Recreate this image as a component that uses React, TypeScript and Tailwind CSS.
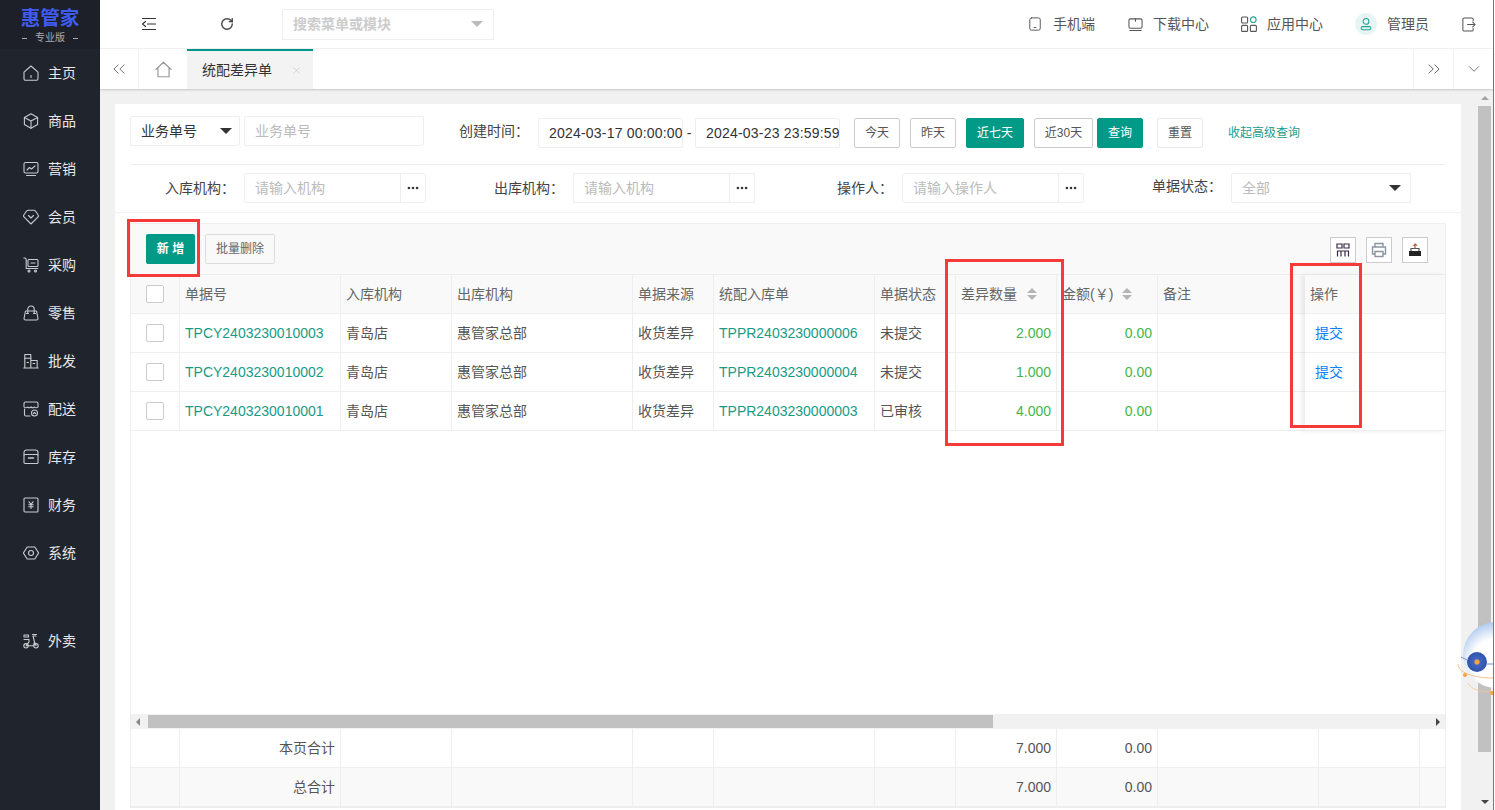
import React from "react";
import {
  ChevronDown,
  ChevronsLeft,
  ChevronsRight,
  MoreHorizontal,
  RotateCw,
  X,
} from "lucide-react";

type IconProps = { className?: string };

const Svg = ({ className, children }: IconProps & { children: React.ReactNode }) => (
  <svg
    viewBox="0 0 16 16"
    fill="none"
    stroke="currentColor"
    strokeWidth="1.1"
    strokeLinecap="round"
    strokeLinejoin="round"
    className={className}
  >
    {children}
  </svg>
);

const navIcons: Record<string, React.ReactNode> = {
  home: (
    <>
      <path d="M1 7.2 8 1l7 6.2v6.6a1.4 1.4 0 0 1-1.4 1.4H2.4A1.4 1.4 0 0 1 1 13.800z" />
      <path d="M8 10.500v2" />
    </>
  ),
  box: (
    <>
      <path d="M8 .8l6.600 3.600v7.200L8 15.200l-6.600-3.600V4.400z" />
      <path d="M1.400 4.400 8 8l6.600-3.600M8 8v7.200" />
    </>
  ),
  chart: (
    <>
      <rect x="1" y="1.500" width="14" height="10.500" rx="1.500" />
      <path d="M4 9l2.500-2.500 2 1.500L12 4.800M3.500 14.500h9" />
    </>
  ),
  gem: (
    <>
      <path d="M8 15 1.200 8.200a2 2 0 0 1-.1-2.700L3.600 2a2 2 0 0 1 1.600-.8h5.600a2 2 0 0 1 1.600.8l2.500 3.500a2 2 0 0 1-.1 2.700z" />
      <path d="M5.500 6.500 8 9l2.500-2.500" />
    </>
  ),
  cart: (
    <>
      <path d="M.8 1h1.400l1 1.200v9.300h11.500" />
      <rect x="5" y="2.500" width="10" height="7" rx="1" />
      <path d="M8 6h4" />
      <circle cx="6" cy="14" r="1" />
      <circle cx="12.500" cy="14" r="1" />
    </>
  ),
  bag: (
    <>
      <path d="M2.500 6h11l1.500 7.500a1.500 1.500 0 0 1-1.500 1.500h-11A1.500 1.500 0 0 1 1 13.500z" />
      <path d="M4.800 8V4.200a3.200 3.200 0 0 1 6.400 0V8" />
      <path d="M3.500 8.500h2M10.500 8.500h2" />
    </>
  ),
  building: (
    <>
      <path d="M1.800 14.500V1.500h6v13M7.800 7.500h6.400v7M.8 15h14.400" />
      <path d="M1.800 5.200h6M4 9.500h1.500M10 10.500h1.800" />
    </>
  ),
  store: (
    <>
      <path d="M2.500 1h11A1.500 1.500 0 0 1 15 2.500V6a2.300 2.300 0 0 1-3.500 0 2.600 2.600 0 0 1-3.500 0 2.600 2.600 0 0 1-3.500 0A2.300 2.300 0 0 1 1 6V2.500A1.500 1.500 0 0 1 2.500 1z" />
      <path d="M1.500 8v5.500A1.500 1.500 0 0 0 3 15h4" />
      <circle cx="11.500" cy="12" r="3" />
      <path d="M10.500 12.500 11.500 11.500l1 1" />
    </>
  ),
  archive: (
    <>
      <path d="M1 6V3.500A2.500 2.500 0 0 1 3.500 1h9A2.500 2.500 0 0 1 15 3.500V6" />
      <rect x="1" y="5.500" width="14" height="9" rx="1" />
      <path d="M5.500 9h5" strokeWidth="1.600" />
    </>
  ),
  yen: (
    <>
      <rect x="1" y="1" width="14" height="14" rx="1" />
      <path d="M6 4.800 8 7.500l2-2.700M5.800 7.800h4.400M5.800 9.800h4.400M8 7.500v4" />
    </>
  ),
  hexagon: (
    <>
      <path d="M4.200 2h7.600L15.600 8l-3.800 6H4.200L.4 8z" />
      <circle cx="8" cy="8" r="2.500" />
    </>
  ),
  bike: (
    <>
      <circle cx="3" cy="12.800" r="2.200" />
      <circle cx="13" cy="12.800" r="2.200" />
      <rect x="1" y="2" width="4.500" height="2" />
      <path d="M1 6.500h5v2.300L3 12.800h7.500l1-3.800-1.500-6h3M9.500 1.500h4M11.500 9l1.500 3.800" />
    </>
  ),
};

const navItems = [
  { label: "主页", icon: "home" },
  { label: "商品", icon: "box" },
  { label: "营销", icon: "chart" },
  { label: "会员", icon: "gem" },
  { label: "采购", icon: "cart" },
  { label: "零售", icon: "bag" },
  { label: "批发", icon: "building" },
  { label: "配送", icon: "store" },
  { label: "库存", icon: "archive" },
  { label: "财务", icon: "yen" },
  { label: "系统", icon: "hexagon" },
];

const NavItem = ({ label, icon }: { label: string; icon: string }) => (
  <div className="flex h-12 items-center pl-[23px] text-[14px] text-[#e8e8e8]">
    <Svg className="mr-[9px] h-4 w-4 text-[#c9cbcf]">{navIcons[icon]}</Svg>
    {label}
  </div>
);

const Sidebar = () => (
  <aside className="flex w-[100px] shrink-0 flex-col bg-[#20242d]">
    <div className="flex h-[49px] flex-col items-center bg-[#1d2029] pt-[6px]">
      <div className="text-[19.500px] font-bold leading-[24px] text-[#3f5cf0]">惠管家</div>
      <div className="mt-px flex items-center text-[10px] leading-[14px] text-[#a9abb0]">
        <span className="mr-[8px] h-px w-[5px] bg-[#a9abb0]" />
        专业版
        <span className="ml-[8px] h-px w-[5px] bg-[#a9abb0]" />
      </div>
    </div>
    {navItems.map((item) => (
      <NavItem key={item.label} {...item} />
    ))}
    <div className="mt-10">
      <NavItem label="外卖" icon="bike" />
    </div>
  </aside>
);

const HeaderLink = ({
  icon,
  label,
  className,
}: {
  icon: React.ReactNode;
  label: string;
  className: string;
}) => (
  <div className={`flex items-center text-[14px] text-[#555] ${className}`}>
    {icon}
    {label}
  </div>
);

const Header = () => (
  <header className="flex h-[49px] shrink-0 items-center border-b border-[#f2f2f2] bg-white">
    <Svg className="ml-[41px] h-4 w-4 text-[#333]">
      <path d="M1.500 2.500h13M6.500 8h8M1.500 13.500h13M4.500 5.500 1.500 8l3 2.500" />
    </Svg>
    <RotateCw size={14} strokeWidth={2.400} className="ml-[63px] text-[#444]" />
    <div className="ml-[48px] flex h-[31px] w-[212px] items-center justify-between border border-[#eee] pl-[10px] pr-[10px] text-[14px] font-semibold text-[#ccc]">
      搜索菜单或模块
      <span className="h-0 w-0 border-x-[6px] border-t-[6px] border-x-transparent border-t-[#bbb]" />
    </div>
    <div className="flex-1" />
    <HeaderLink
      className="w-[100px]"
      label="手机端"
      icon={
        <Svg className="mr-[11px] h-[14px] w-[14px] text-[#555]">
          <rect x="2" y="1" width="12" height="14" rx="2" />
          <path d="M7 12h2" />
        </Svg>
      }
    />
    <HeaderLink
      className="w-[113px]"
      label="下载中心"
      icon={
        <Svg className="mr-[10px] h-[15px] w-[15px] text-[#555]">
          <rect x="1" y="2" width="14" height="10" rx="1.500" />
          <path d="M2 14.500h12M8 2v2.500" />
        </Svg>
      }
    />
    <HeaderLink
      className="w-[114px]"
      label="应用中心"
      icon={
        <svg viewBox="0 0 16 16" fill="none" strokeWidth="1.100" className="mr-[10px] h-4 w-4">
          <rect x=".6" y="1" width="6" height="6" rx="1" stroke="#555" />
          <rect x=".6" y="9.400" width="6" height="6" rx="1" stroke="#555" />
          <rect x="9.400" y="9.400" width="6" height="6" rx="1" stroke="#555" />
          <circle cx="12.300" cy="3.700" r="2.800" stroke="#1fa594" />
        </svg>
      }
    />
    <div className="flex w-[106px] items-center text-[14px] text-[#555]">
      <span className="mr-[10px] flex h-[22px] w-[22px] items-center justify-center rounded-full bg-[#e6f5f3]">
        <svg viewBox="0 0 16 16" fill="none" stroke="#1fa594" strokeWidth="1.200" className="h-[14px] w-[14px]">
          <circle cx="8" cy="5" r="3.300" />
          <rect x="2.500" y="11" width="11" height="3.500" rx="1.700" />
        </svg>
      </span>
      管理员
    </div>
    <Svg className="mr-[17px] h-[15px] w-[15px] text-[#555]">
      <path d="M13 4V2.500A1.500 1.500 0 0 0 11.500 1h-8A1.500 1.500 0 0 0 2 2.500v11A1.500 1.500 0 0 0 3.500 15h8a1.500 1.500 0 0 0 1.500-1.500V12" />
      <path d="M7 8h8M12.500 5.500 15 8l-2.500 2.500" />
    </Svg>
  </header>
);

const TabBar = () => (
  <div className="z-10 flex h-[40px] shrink-0 items-stretch bg-white shadow-[0_1px_2px_rgba(0,0,0,0.18)]">
    <div className="flex w-[39px] items-center justify-center border-r border-[#f2f2f2] text-[#666]">
      <ChevronsLeft size={20} strokeWidth={1.100} />
    </div>
    <div className="flex w-[48px] items-center justify-center text-[#999]">
      <Svg className="h-[17px] w-[17px]">
        <path d="M.8 8 8 1.200 15.200 8M2.800 7v7.800h10.400V7" />
      </Svg>
    </div>
    <div className="flex w-[126px] items-center border-t-[2px] border-[#009688] bg-[#f3f3f3] pl-[15px] text-[14px] text-[#333]">
      统配差异单
      <X size={11} strokeWidth={1.200} className="ml-[19px] text-[#bbb]" />
    </div>
    <div className="flex-1" />
    <div className="flex w-[40px] items-center justify-center border-l border-[#f2f2f2] text-[#555]">
      <ChevronsRight size={20} strokeWidth={1.100} />
    </div>
    <div className="flex w-[40px] items-center justify-center border-l border-[#f2f2f2] text-[#555]">
      <ChevronDown size={18} strokeWidth={1.100} />
    </div>
  </div>
);

const Caret = () => (
  <span className="h-0 w-0 border-x-[6px] border-t-[6px] border-x-transparent border-t-[#333]" />
);

const SmallBtn = ({
  label,
  className,
  active,
}: {
  label: string;
  className: string;
  active?: boolean;
}) => (
  <div
    className={`flex h-[30px] items-center justify-center rounded-[2px] border text-[12px] ${
      active
        ? "border-[#009a87] bg-[#009a87] text-white"
        : "border-[#ccc] bg-white text-[#555]"
    } ${className}`}
  >
    {label}
  </div>
);

const PickerField = ({
  label,
  placeholder,
  className,
}: {
  label: string;
  placeholder: string;
  className: string;
}) => (
  <div className={`flex items-center ${className}`}>
    <span className="w-[93px] shrink-0 pr-[2px] text-right text-[14px] text-[#444]">{label}</span>
    <div className="ml-[7px] flex h-[30px] w-[182px] rounded-[2px] border border-[#eee] text-[14px] text-[#bbb]">
      <span className="flex flex-1 items-center pl-[10px]">{placeholder}</span>
      <span className="flex w-[25px] items-center justify-center border-l border-[#eee] text-[#333]">
        <MoreHorizontal size={14} strokeWidth={2.500} />
      </span>
    </div>
  </div>
);

const DateBox = ({ value }: { value: string }) => (
  <div className="flex h-[30px] w-[145px] items-center overflow-hidden whitespace-nowrap rounded-[2px] border border-[#eee] pl-[10px] tracking-[0.2px]">
    {value}
  </div>
);

const QueryForm = () => (
  <div className="px-[15px]">
    <div className="flex h-[61px] items-start border-b border-[#eee] pt-[12px]">
      <div className="flex h-[30px] w-[110px] items-center justify-between rounded-[2px] border border-[#eee] pl-[10px] pr-[7px] text-[14px] text-[#333]">
        业务单号
        <Caret />
      </div>
      <div className="ml-[4px] flex h-[30px] w-[180px] items-center rounded-[2px] border border-[#eee] pl-[10px] text-[14px] text-[#bbb]">
        业务单号
      </div>
      <span className="ml-[35px] text-[14px] leading-[30px] text-[#444]">创建时间：</span>
      <div className="mt-[2px] ml-[9px] flex items-center text-[14px] text-[#333]">
        <DateBox value="2024-03-17 00:00:00" />
        <span className="w-[12px] text-center">-</span>
        <DateBox value="2024-03-23 23:59:59" />
      </div>
      <div className="mt-[2px] ml-[14px] flex">
        <SmallBtn label="今天" className="w-[46px]" />
        <SmallBtn label="昨天" className="ml-[10px] w-[46px]" />
        <SmallBtn label="近七天" active className="ml-[10px] w-[58px]" />
        <SmallBtn label="近30天" className="ml-[10px] w-[59px]" />
        <SmallBtn label="查询" active className="ml-[4px] w-[46px]" />
        <SmallBtn label="重置" className="ml-[14px] w-[46px] !border-[#e8e8e8]" />
      </div>
      <span className="ml-[25px] mt-[3px] text-[12px] leading-[28px] text-[#1c9c8b]">收起高级查询</span>
    </div>
    <div className="flex h-[47px] items-start pt-[8px]">
      <PickerField className="ml-[14px]" label="入库机构：" placeholder="请输入机构" />
      <PickerField className="ml-[47px]" label="出库机构：" placeholder="请输入机构" />
      <PickerField className="ml-[47px]" label="操作人：" placeholder="请输入操作人" />
      <span className="ml-[68px] text-[14px] leading-[26px] text-[#444]">单据状态：</span>
      <div className="ml-[9px] flex h-[30px] w-[180px] items-center justify-between rounded-[2px] border border-[#eee] pl-[10px] pr-[9px] text-[14px] text-[#bbb]">
        全部
        <Caret />
      </div>
    </div>
  </div>
);

const gridCols =
  "grid grid-cols-[49px_161px_111px_181px_81px_161px_81px_101px_101px_161px_101px_25px]";

const Checkbox = () => (
  <span className="block h-[18px] w-[18px] rounded-[2px] border border-[#ccc] bg-white" />
);

const Cell = ({ children, className = "" }: { children?: React.ReactNode; className?: string }) => (
  <div className={`flex h-[38px] items-center border-r border-[#eee] px-[5px] ${className}`}>
    {children}
  </div>
);

const SortArrows = ({ className }: { className: string }) => (
  <span className={`flex flex-col gap-[2px] ${className}`}>
    <span className="h-0 w-0 border-x-[5px] border-b-[5px] border-x-transparent border-b-[#b5b5b5]" />
    <span className="h-0 w-0 border-x-[5px] border-t-[5px] border-x-transparent border-t-[#b5b5b5]" />
  </span>
);

const rows = [
  { no: "TPCY2403230010003", order: "TPPR2403230000006", status: "未提交", diff: "2.000" },
  { no: "TPCY2403230010002", order: "TPPR2403230000004", status: "未提交", diff: "1.000" },
  { no: "TPCY2403230010001", order: "TPPR2403230000003", status: "已审核", diff: "4.000" },
];

const ToolIcon = ({ children }: { children: React.ReactNode }) => (
  <span className="flex h-[26px] w-[26px] items-center justify-center border border-[#ccc] bg-white">
    {children}
  </span>
);

const Toolbar = () => (
  <div className="flex h-[51px] items-center border-b border-[#eee] pl-[15px] pr-[17px]">
    <div className="flex h-[30px] w-[49px] items-center justify-center rounded-[2px] bg-[#009a87] text-[12px] font-semibold text-white">
      新 增
    </div>
    <div className="ml-[10px] flex h-[30px] w-[70px] items-center justify-center rounded-[2px] border border-[#ddd] text-[12px] text-[#666]">
      批量删除
    </div>
    <div className="flex-1" />
    <div className="flex gap-[10px] pt-[2px]">
      <ToolIcon>
        <svg viewBox="0 0 14 14" fill="none" stroke="#3a2a4a" strokeWidth="1.200" className="h-[14px] w-[14px]">
          <path d="M1 1h5v4H1zM8 1h5v4H8zM1 8h12M1.500 8v5.500M5 8v5.500M9 8v5.500M12.500 8v5.500" />
        </svg>
      </ToolIcon>
      <ToolIcon>
        <svg viewBox="0 0 16 16" fill="none" stroke="#8a97a3" strokeWidth="1.400" className="h-4 w-4">
          <path d="M4 5V1.500h8V5M4 12H1.500V5h13v7H12" />
          <path d="M4 9.500h8v5H4z" />
        </svg>
      </ToolIcon>
      <ToolIcon>
        <svg viewBox="0 0 16 16" className="h-4 w-4">
          <path d="M2 9h12v5H2z" fill="#222" />
          <path d="M4 9V6.500h8V9" fill="none" stroke="#555" strokeWidth="1.200" />
          <path d="M8 6V2.500M6.500 4 8 2l2 1.500" fill="none" stroke="#c0512b" strokeWidth="1.200" />
        </svg>
      </ToolIcon>
    </div>
  </div>
);

const DataTable = () => (
  <div className="relative h-[439px] bg-white">
    <div className={`${gridCols} border-b border-[#eee] bg-[#f9f9f9] text-[14px] text-[#666]`}>
      <Cell className="justify-center">
        <Checkbox />
      </Cell>
      <Cell>单据号</Cell>
      <Cell>入库机构</Cell>
      <Cell>出库机构</Cell>
      <Cell>单据来源</Cell>
      <Cell>统配入库单</Cell>
      <Cell>单据状态</Cell>
      <Cell>
        差异数量
        <SortArrows className="ml-[10px]" />
      </Cell>
      <Cell>
        金额(￥)
        <SortArrows className="ml-[9px]" />
      </Cell>
      <Cell>备注</Cell>
      <Cell />
      <Cell className="border-r-0" />
    </div>
    {rows.map((row) => (
      <div key={row.no} className={`${gridCols} border-b border-[#eee] text-[14px] text-[#555]`}>
        <Cell className="justify-center">
          <Checkbox />
        </Cell>
        <Cell className="text-[#1a9a85]">{row.no}</Cell>
        <Cell>青岛店</Cell>
        <Cell>惠管家总部</Cell>
        <Cell>收货差异</Cell>
        <Cell className="text-[#1a9a85]">{row.order}</Cell>
        <Cell>{row.status}</Cell>
        <Cell className="justify-end text-[#45b549]">{row.diff}</Cell>
        <Cell className="justify-end text-[#45b549]">0.00</Cell>
        <Cell />
        <Cell />
        <Cell className="border-r-0" />
      </div>
    ))}

    {/* fixed action column */}
    <div className="absolute right-0 top-0 w-[140px] bg-white text-[14px] shadow-[-3px_0_5px_rgba(0,0,0,0.08)]">
      <div className="flex h-[39px] items-center border-b border-[#eee] bg-[#f9f9f9] pl-[5px] text-[#666]">
        操作
      </div>
      <div className="flex h-[39px] items-center border-b border-[#eee] pl-[10px] text-[#0a7ff5]">提交</div>
      <div className="flex h-[39px] items-center border-b border-[#eee] pl-[10px] text-[#0a7ff5]">提交</div>
      <div className="h-[39px] border-b border-[#eee]" />
    </div>
  </div>
);

const HScrollbar = () => (
  <div className="flex h-[15px] items-center bg-[#f1f1f1]">
    <span className="ml-[5px] h-0 w-0 border-y-[4px] border-r-[4px] border-y-transparent border-r-[#888]" />
    <span className="ml-[8px] h-[13px] w-[845px] bg-[#c1c1c1]" />
    <span className="flex-1" />
    <span className="mr-[5px] h-0 w-0 border-y-[4px] border-l-[4px] border-y-transparent border-l-[#444]" />
  </div>
);

const SummaryRow = ({ label, className = "" }: { label: string; className?: string }) => (
  <div className={`${gridCols} border-b border-[#eee] text-[14px] text-[#555] ${className}`}>
    <Cell />
    <Cell className="justify-end">{label}</Cell>
    <Cell />
    <Cell />
    <Cell />
    <Cell />
    <Cell />
    <Cell className="justify-end">7.000</Cell>
    <Cell className="justify-end">0.00</Cell>
    <Cell />
    <Cell />
    <Cell className="border-r-0" />
  </div>
);

const Annotation = ({ className }: { className: string }) => (
  <div className={`pointer-events-none absolute z-20 border-[3px] border-[#f63a3a] ${className}`} />
);

const Robot = () => (
  <svg viewBox="0 0 38 80" className="absolute left-[1455px] top-[621px] z-20 h-[80px] w-[38px]">
    <defs>
      <radialGradient id="robotHead" cx="0.5" cy="0.62" r="0.66">
        <stop offset="0.55" stopColor="#ffffff" />
        <stop offset="1" stopColor="#a4c2ec" />
      </radialGradient>
      <radialGradient id="robotEye" cx="0.5" cy="0.5" r="0.5">
        <stop offset="0.2" stopColor="#f5a33b" />
        <stop offset="0.32" stopColor="#3f66c6" />
        <stop offset="1" stopColor="#3153a8" />
      </radialGradient>
    </defs>
    <circle cx="41" cy="34" r="33" fill="url(#robotHead)" />
    <path d="M3 43c0 8 14 14 35 14" fill="none" stroke="#f8b26a" strokeWidth="0.800" />
    <path d="M13 62c3 7 14 9 25 9" fill="none" stroke="#f8c48a" strokeWidth="0.800" />
    <path d="M6 36l6 3M32 43h6" stroke="#7b8fd0" strokeWidth="1" />
    <circle cx="22" cy="41" r="10" fill="url(#robotEye)" />
    <circle cx="10" cy="54" r="2" fill="#f7a443" />
    <circle cx="37" cy="72" r="2" fill="#f7a443" />
  </svg>
);

const VScrollbar = () => (
  <div className="flex w-[17px] shrink-0 flex-col items-center bg-[#f1f1f1]">
    <span className="mt-[7px] h-0 w-0 border-x-[4px] border-b-[4px] border-x-transparent border-b-[#a3a3a3]" />
    <span className="mt-[6px] h-[646px] w-[13px] bg-[#c1c1c1]" />
    <span className="mt-[48px] h-0 w-0 border-x-[4px] border-t-[4px] border-x-transparent border-t-[#444]" />
  </div>
);

export default function App() {
  return (
    <div className="relative flex h-[810px] w-[1495px] overflow-hidden bg-white font-['Liberation_Sans','Noto_Sans_CJK_SC',sans-serif]">
      <Sidebar />
      <main className="flex min-w-0 flex-1 flex-col">
        <Header />
        <TabBar />
        <div className="flex min-h-0 flex-1 overflow-hidden bg-[#f1f1f1]">
          <div className="min-w-0 flex-1 px-[15px] pt-[15px]">
            <div className="h-[720px] bg-white">
              <QueryForm />
              <div className="border-t border-[#f2f2f2] px-[15px] pt-[10px]">
                <div className="border border-[#eee] bg-[#f9f9f9]">
                  <Toolbar />
                  <DataTable />
                  <HScrollbar />
                  <SummaryRow label="本页合计" className="bg-white" />
                  <SummaryRow label="总合计" />
                </div>
              </div>
            </div>
          </div>
          <VScrollbar />
        </div>
      </main>
      <div className="w-px shrink-0 bg-[#777]" />
      <div className="w-px shrink-0 bg-white" />

      {/* review markers and floating assistant */}
      <Annotation className="left-[127px] top-[219px] h-[58px] w-[73px]" />
      <Annotation className="left-[945px] top-[259px] h-[187px] w-[119px]" />
      <Annotation className="left-[1290px] top-[263px] h-[165px] w-[72px]" />
      <Robot />
    </div>
  );
}
